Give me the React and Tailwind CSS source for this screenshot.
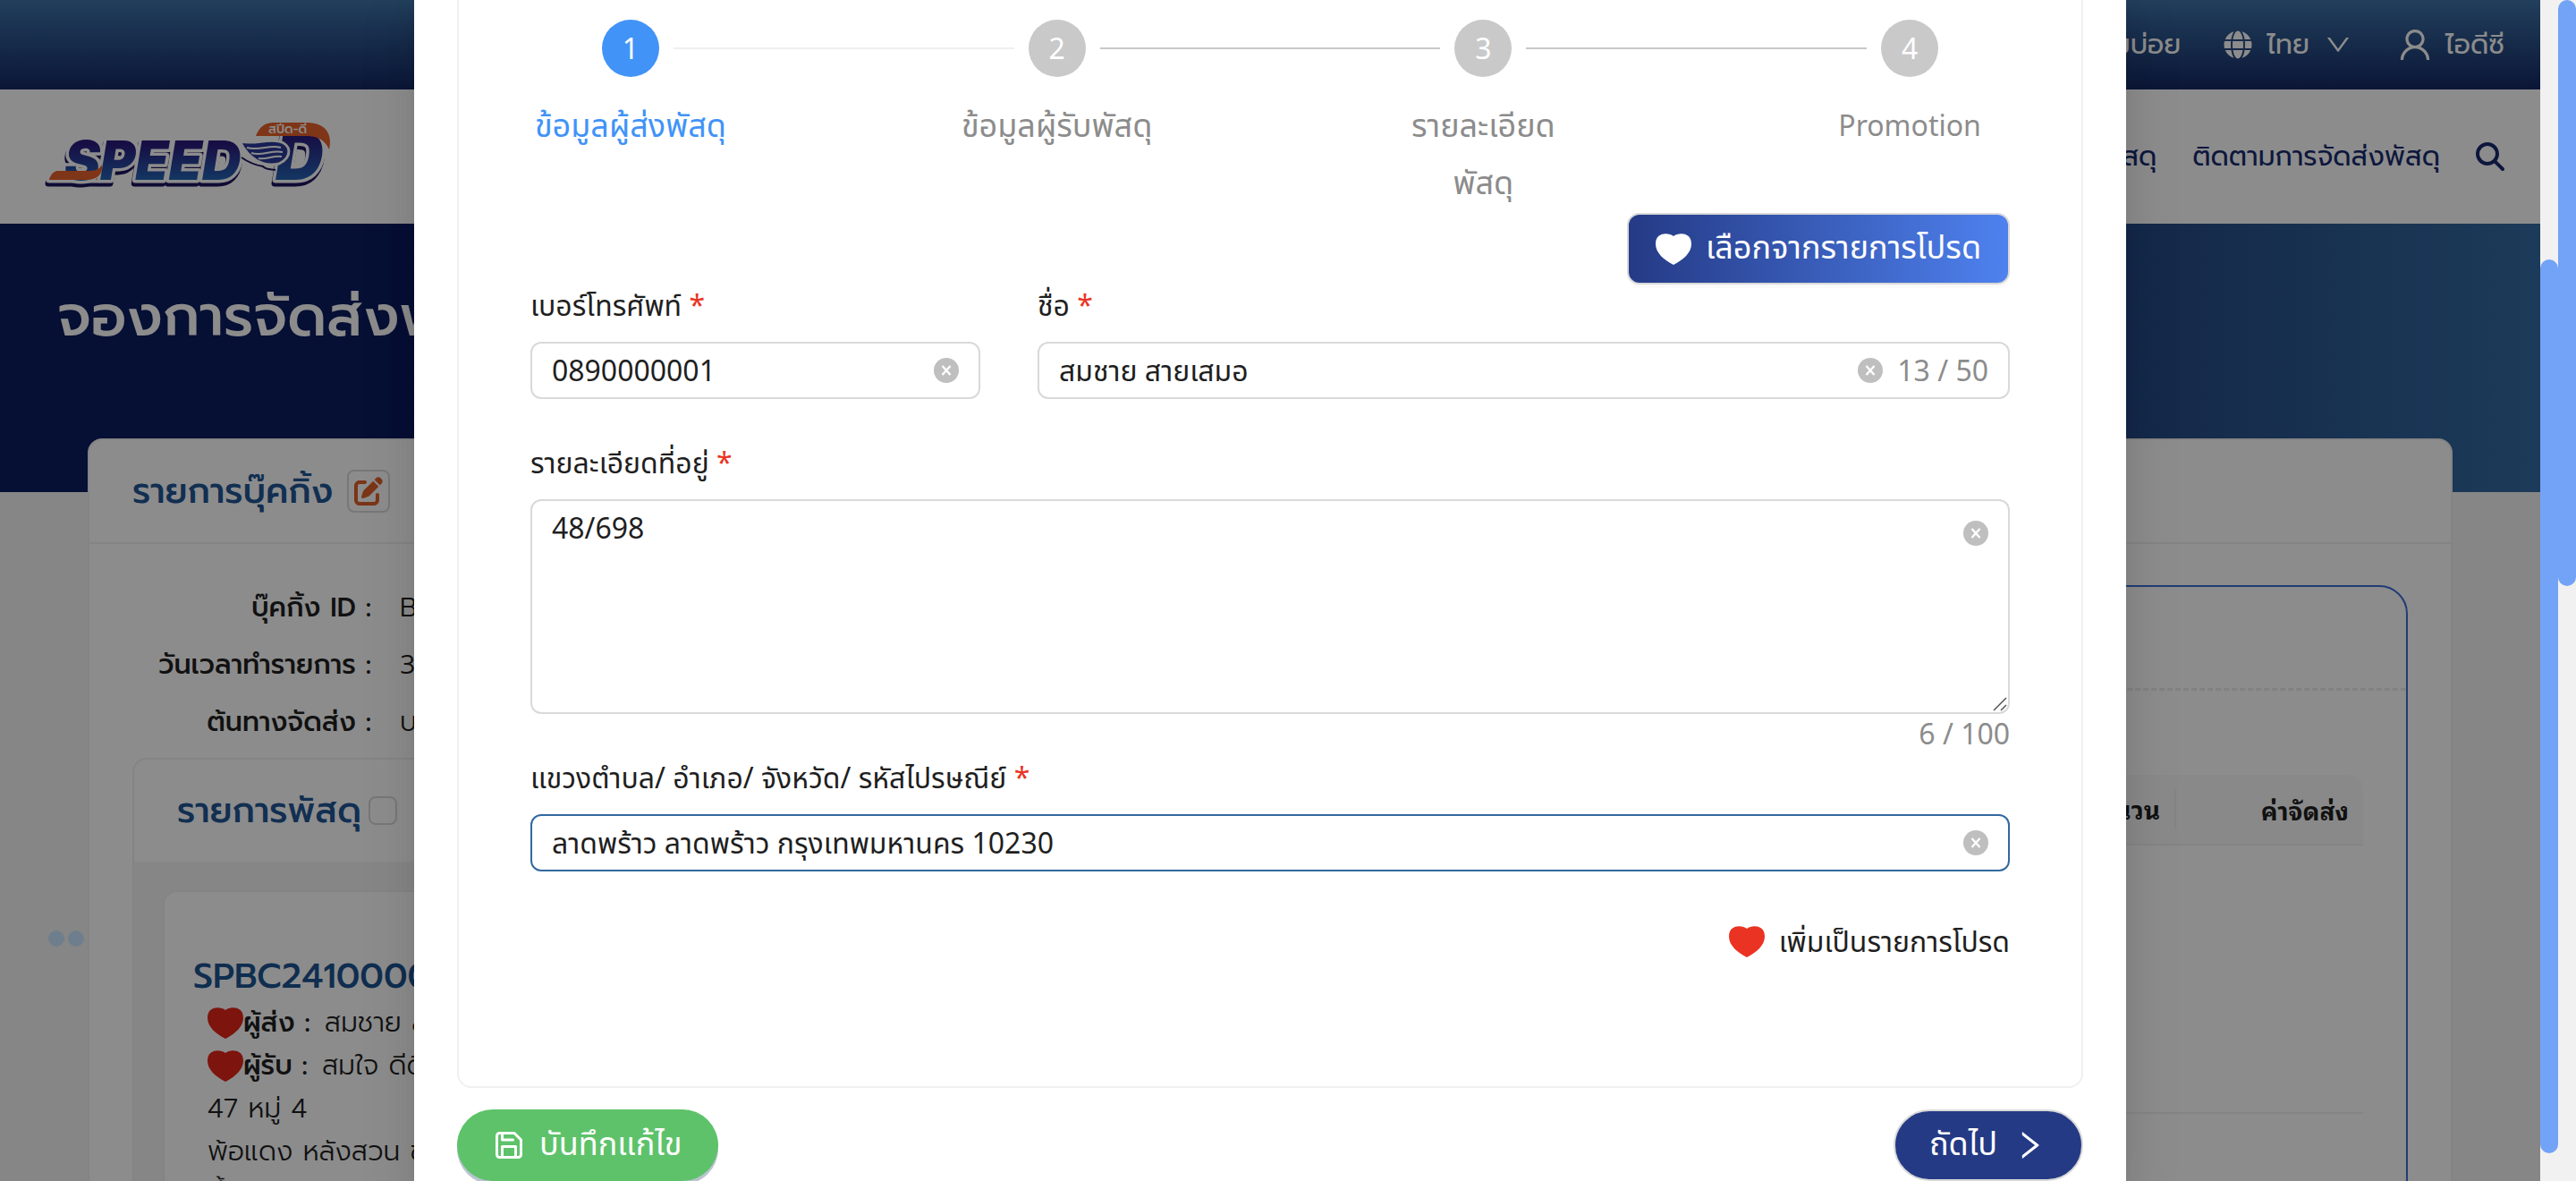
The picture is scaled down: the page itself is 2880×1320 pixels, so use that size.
import { FaGlobe } from 'react-icons/fa';
import { FaPenToSquare, FaMagnifyingGlass } from 'react-icons/fa6';
import { AiOutlineUser, AiOutlineDown, AiOutlineRight } from 'react-icons/ai';
import { FiSave } from 'react-icons/fi';

function Heart({ className }) {
  return (
    <svg viewBox="0 0 40 36" preserveAspectRatio="none" fill="currentColor" className={className} aria-hidden="true">
      <path d="M20 3 C14 -1.5 0 -1.5 0 12 C0 22 9 30 20 36 C31 30 40 22 40 12 C40 -1.5 26 -1.5 20 3Z" />
    </svg>
  );
}

function Logo() {
  return (
    <svg viewBox="0 0 330 80" className="h-20 w-[330px]" role="img" aria-label="SPEED-D">
      <defs>
        <linearGradient id="ink" x1="0" y1="0" x2="0" y2="1">
          <stop offset="0.25" stopColor="#2a1a7c" />
          <stop offset="0.9" stopColor="#2470bd" />
        </linearGradient>
      </defs>
      <g fontFamily="Inter" fontStyle="italic" fontWeight="900" strokeLinejoin="round" stroke="#fff" strokeWidth="7" className="drop-shadow-[-1px_4px_0_#1c1560] [paint-order:stroke]">
        <path d="M5 66 C7 60 10 56 16 56 H60 V66Z" fill="#e8622a" />
        <text x="22" y="66" fontSize="60" fill="url(#ink)">SPEED</text>
        <text x="258" y="66" fontSize="74" fill="url(#ink)">D</text>
      </g>
      <path d="M5 66 C7 60 10 56 16 56 H50 C58 56 62 53 64 49 C65 59 60 66 46 66Z" fill="#e8622a" />
      <path d="M236 17 C240 7 246 2 256 2 H293 C315 2 322 16 318 32 C312 19 302 17 290 17Z" fill="#e8622a" />
      <path d="M218 23 C234 27 247 20 262 23 C275 26 278 40 262 48 C244 52 228 43 218 23Z" fill="#2a3a9c" stroke="#fff" strokeWidth="3" />
      <path d="M226 30 C240 34 252 26 264 30 M231 36 C243 40 254 32 266 35 M239 42 C248 44 256 38 265 40" fill="none" stroke="#fff" strokeWidth="2" />
      <path d="M220 41 C230 48 238 50 244 51 C248 55 252 54 258 55" fill="none" stroke="#1c1560" strokeWidth="2" />
      <text x="250" y="14" fontSize="14" fontFamily="Prompt" fontWeight="500" fill="#fff">สปีด-ดี</text>
    </svg>
  );
}

function Clear({ label }) {
  return (
    <button type="button" aria-label={label} className="flex size-7 shrink-0 items-center justify-center rounded-full bg-[#bfbfbf]">
      <svg viewBox="0 0 28 28" className="size-7" fill="none" stroke="#fff" strokeWidth="2.4" aria-hidden="true">
        <path d="M9.5 9 L18.5 19 M18.5 9 L9.5 19" />
      </svg>
    </button>
  );
}

function Label({ htmlFor, children }) {
  return (
    <label htmlFor={htmlFor} className="block pb-[18px] text-[32px] leading-[46px] text-[#1f1f1f]">
      {children} <span className="text-[#ea3323]">*</span>
    </label>
  );
}

function TextBox({ id, value, count, focused }) {
  return (
    <div className={`flex h-16 items-center gap-4 rounded-xl border-2 px-[22px] ${focused ? 'border-[#32699f]' : 'border-[#d9d9d9]'}`}>
      <input id={id} defaultValue={value} className="min-w-0 flex-1 text-[32px] leading-[48px] text-[#1f1f1f] outline-none" />
      <Clear label="ล้าง" />
      {count && <span className="text-[32px] leading-[48px] text-[#8c8c8c]">{count}</span>}
    </div>
  );
}

const steps = [
  { title: 'ข้อมูลผู้ส่งพัสดุ', style: 'text-[36px] text-[#4193f7]' },
  { title: 'ข้อมูลผู้รับพัสดุ', style: 'text-[36px] text-[#8c8c8c]' },
  { title: 'รายละเอียดพัสดุ', style: 'text-[36px] text-[#8c8c8c]' },
  { title: 'Promotion', style: 'text-[32px] text-[#8c8c8c]' },
];

function Steps() {
  return (
    <ol className="flex">
      {steps.map((s, i) => (
        <li key={s.title} className={i < 3 ? 'min-w-0 flex-1' : 'w-56'}>
          <div className="flex items-center gap-4 pl-20">
            <span className={`flex size-16 shrink-0 items-center justify-center rounded-full text-[32px] text-white ${i ? 'bg-[#c9c9c9]' : 'bg-[#4193f7]'}`}>{i + 1}</span>
            {i < 3 && <span className={`-mr-16 h-0.5 flex-1 ${i ? 'bg-[#c9c9c9]' : 'bg-[#f0f0f0]'}`} />}
          </div>
          <div className={`mt-6 w-56 text-center font-['Noto_Sans_Thai'] leading-[64px] ${s.style}`}>{s.title}</div>
        </li>
      ))}
    </ol>
  );
}

function Modal() {
  return (
    <div role="dialog" aria-label="ข้อมูลผู้ส่งพัสดุ" className="h-full w-[67.4%] overflow-hidden bg-white px-12 font-['Noto_Sans','Noto_Sans_Thai',sans-serif] shadow-[0_12px_32px_0_rgba(0,0,0,0.08),0_6px_12px_-8px_rgba(0,0,0,0.12),0_18px_56px_16px_rgba(0,0,0,0.05)]">
      <section className="rounded-b-2xl border-2 border-t-0 border-[#f0f0f0] px-20 pt-[22px] pb-[138px]">
        <div className="h-[216px]"><Steps /></div>
        <div className="flex justify-end">
          <button type="button" className="flex h-20 items-center gap-4 rounded-[14px] border-2 border-[#d9d9d9] bg-linear-to-r from-[#253a85] to-[#4f82f0] bg-origin-border px-[30px] font-['Noto_Sans_Thai'] text-[36px] text-white shadow-[0_4px_0_rgba(0,0,0,0.02)]">
            <Heart className="h-[35px] w-10" />
            เลือกจากรายการโปรด
          </button>
        </div>
        <form>
          <div className="flex gap-16">
            <div className="min-w-0 flex-[503]">
              <Label htmlFor="phone">เบอร์โทรศัพท์</Label>
              <TextBox id="phone" value="0890000001" />
            </div>
            <div className="min-w-0 flex-[1087]">
              <Label htmlFor="name">ชื่อ</Label>
              <TextBox id="name" value="สมชาย สายเสมอ" count="13 / 50" />
            </div>
          </div>
          <div className="mt-12">
            <Label htmlFor="address">รายละเอียดที่อยู่</Label>
            <div className="relative">
              <textarea id="address" defaultValue="48/698" className="block h-60 w-full resize-none rounded-xl border-2 border-[#d9d9d9] px-[22px] py-2 text-[32px] leading-[44px] text-[#1f1f1f] outline-none" />
              <div className="absolute top-6 right-6"><Clear label="ล้างที่อยู่" /></div>
              <svg viewBox="0 0 16 16" className="absolute right-[3px] bottom-[3px] size-4" stroke="#555" strokeWidth="1.5" aria-hidden="true">
                <path d="M1 15 L15 1 M9 15 L15 9" />
              </svg>
            </div>
            <div className="text-right text-[32px] leading-[44px] text-[#8c8c8c]">6 / 100</div>
          </div>
          <div className="mt-1">
            <Label htmlFor="area">แขวงตำบล/ อำเภอ/ จังหวัด/ รหัสไปรษณีย์</Label>
            <TextBox id="area" value="ลาดพร้าว ลาดพร้าว กรุงเทพมหานคร 10230" focused />
          </div>
          <div className="mt-[54px] flex justify-end">
            <button type="button" className="flex items-center gap-4 text-[32px] leading-[48px] text-[#1f1f1f]">
              <Heart className="h-[35px] w-10 text-[#ea3323]" />
              เพิ่มเป็นรายการโปรด
            </button>
          </div>
        </form>
      </section>
      <footer className="flex justify-between pt-6 font-['Noto_Sans_Thai']">
        <button type="button" className="flex h-20 items-center gap-4 rounded-full bg-[#5ec26a] px-10 text-[36px] text-white shadow-[0_4px_0_#b9c4cf]">
          <FiSave className="size-9" />
          บันทึกแก้ไข
        </button>
        <button type="button" className="flex h-20 items-center gap-4 rounded-full border-2 border-[#d9d9d9] bg-[#253a85] px-[38px] text-[36px] text-white">
          ถัดไป
          <AiOutlineRight className="size-10" />
        </button>
      </footer>
    </div>
  );
}

const info = [
  ['บุ๊คกิ้ง ID :', 'BC24100000012'],
  ['วันเวลาทำรายการ :', '31/10/2024 10:24'],
  ['ต้นทางจัดส่ง :', 'บางเขน กรุงเทพมหานคร'],
];

function Page() {
  return (
    <div className="h-full overflow-hidden bg-[#f5f5f5] font-['Prompt',sans-serif]">
      <div className="flex h-[100px] items-center justify-end bg-linear-to-b from-[#3e74a8] to-[#162864] px-10 text-[30px] text-white">
        <a href="#faq" className="mr-12">คำถามที่ถามบ่อย</a>
        <button type="button" className="mr-12 flex items-center gap-4">
          <FaGlobe className="size-8" />ไทย<AiOutlineDown className="size-8" />
        </button>
        <a href="#account" className="flex items-center gap-3"><AiOutlineUser className="size-11" />ไอดีซี</a>
      </div>
      <nav className="flex h-[150px] items-center justify-between bg-white pr-10 pl-[50px] text-[30px] text-[#182b70]">
        <Logo />
        <div className="flex items-center gap-10">
          <a href="#book">จองการจัดส่งพัสดุ</a>
          <a href="#track">ติดตามการจัดส่งพัสดุ</a>
          <button type="button" aria-label="ค้นหา"><FaMagnifyingGlass className="size-8" /></button>
        </div>
      </nav>
      <header className="h-[300px] bg-[linear-gradient(to_right,#0b1d60_0%,#0b1d60_16%,#264a86_84%,#346ba3_100%)] px-16 pt-[54px]">
        <h1 className="text-[64px] leading-[100px] font-medium text-white">จองการจัดส่งพัสดุ</h1>
      </header>
      <main className="mx-[98px] -mt-[60px] h-[1000px] rounded-t-2xl border-2 border-[#f0f0f0] bg-white">
        <div className="flex h-[116px] items-center gap-4 border-b-2 border-[#f0f0f0] px-12">
          <h2 className="text-[39px] font-medium text-[#215696]">รายการบุ๊คกิ้ง</h2>
          <button type="button" aria-label="แก้ไข" className="flex size-12 items-center justify-center rounded-lg border-2 border-[#d9d9d9] text-[#e0622a]"><FaPenToSquare className="size-8" /></button>
        </div>
        <div className="grid grid-cols-2 gap-x-24 px-12">
          <div>
            <dl className="pt-[39px] text-[30px] leading-[64px] text-[#1f1f1f]">
              {info.map(([k, v]) => (
                <div key={k} className="flex gap-8">
                  <dt className="w-[267px] shrink-0 text-right font-medium whitespace-nowrap">{k}</dt>
                  <dd className="font-light">{v}</dd>
                </div>
              ))}
            </dl>
            <section className="mt-2 rounded-t-2xl border-2 border-[#f0f0f0]">
              <div className="flex h-[114px] items-center gap-2 px-12">
                <h2 className="text-[39px] font-medium text-[#215696]">รายการพัสดุ</h2>
                <input type="checkbox" aria-label="เลือกทั้งหมด" className="size-8 appearance-none rounded-lg border-2 border-[#d9d9d9]" />
              </div>
              <div className="bg-[#f5f5f5] px-8 pt-8">
                <article className="h-[600px] rounded-2xl border-2 border-[#f0f0f0] bg-white px-8 pt-[66px] text-[30px] leading-[48px] text-[#1f1f1f]">
                  <h3 className="text-[39px] leading-[56px] font-medium text-[#1c5592]">SPBC24100000025</h3>
                  <div className="pl-4 font-light">
                    <p className="flex items-center"><Heart className="h-[35px] w-10 text-[#e3261a]" /><b className="mr-4 font-medium">ผู้ส่ง :</b>สมชาย สายเสมอ</p>
                    <p className="flex items-center"><Heart className="h-[35px] w-10 text-[#e3261a]" /><b className="mr-4 font-medium">ผู้รับ :</b>สมใจ ดีดี</p>
                    <p>47 หมู่ 4</p>
                    <p>พ้อแดง หลังสวน ชุมพร</p>
                    <p>น้ำหนัก : 1 กก.</p>
                  </div>
                </article>
              </div>
            </section>
          </div>
          <section className="mt-[46px] h-[900px] rounded-t-[32px] border-2 border-[#3d6fd6]">
            <div className="h-[116px] border-b-[3px] border-dashed border-[#ececec]" />
            <div className="px-12 pt-[94px]">
              <table className="w-full text-right font-['Noto_Sans_Thai_Looped'] text-[28px] text-[#1f1f1f]">
                <thead>
                  <tr className="h-[78px] border-b-2 border-[#f0f0f0] bg-[#fafafa]">
                    <th className="p-0"><div className="h-11 border-r-2 border-[#f0f0f0] pr-4">จำนวน</div></th>
                    <th className="w-[209px] rounded-tr-2xl py-0 pr-4">ค่าจัดส่ง</th>
                  </tr>
                </thead>
                <tbody>
                  <tr className="h-[300px] border-b-2 border-[#f0f0f0]"><td /><td /></tr>
                </tbody>
              </table>
            </div>
          </section>
        </div>
      </main>
    </div>
  );
}

export default function App() {
  return (
    <div className="flex h-screen overflow-hidden bg-[#f1f1f1]">
      <div className="relative min-w-0 flex-1">
        <Page />
        <div className="absolute top-[1040px] left-[54px] flex gap-1">
          <span className="size-[18px] rounded-full bg-[#cae6ff]" />
          <span className="size-[18px] rounded-full bg-[#cae6ff]" />
        </div>
        <div className="absolute inset-0 flex justify-center bg-black/45">
          <Modal />
        </div>
      </div>
      <div className="w-5 pt-[290px] pb-[31px]"><div className="h-full rounded-full bg-[#72a3f7]" /></div>
      <div className="w-5"><div className="h-[655px] rounded-full bg-[#72a3f7]" /></div>
    </div>
  );
}
